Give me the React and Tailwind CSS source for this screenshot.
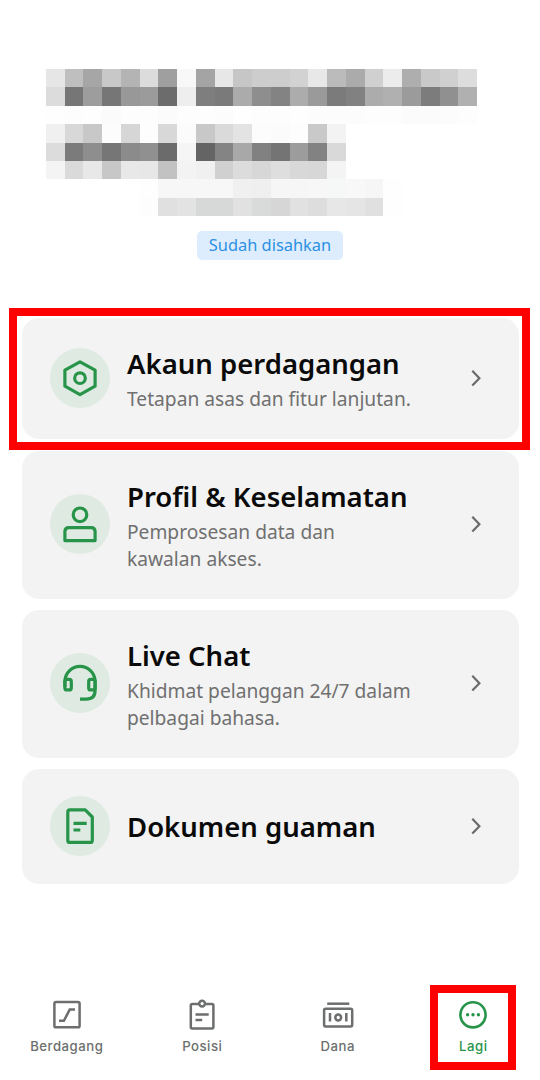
import clsx from "clsx";

/* gray level per cell (two hex digits), tinted cells are written in full */
const MOSAIC = [
  "e6 bf a6 c8 b4 dc 9f f8 a4 e7 c6 cd cd d2 e8 bb ab d0 ec ae c9 d0 dd",
  "dc 76 9d 76 98 9b 6c ee 7e 7a ab 8e 83 ac 9a 7b 81 ac b0 9b 7c 90 b0",
  "fe fd fe fb fd fd fb fd fd fc fe fd fd fe fc fc fc fd fd fb fb fc fd",
  "f0 d8 c8 fc d6 fd d8 fb c8 da e3 fc fb fd c9 f3 ff ff ff ff ff ff ff",
  "dc 7b 8e 76 8b 90 6b f5 64 84 a8 81 74 9c 82 d9 ff ff ff ff ff ff ff",
  "f4 da e8 c7 e8 e7 c2 f3 f0 d0 dc d7 de d8 d7 f4 ff ff ff ff ff ff ff",
  "ff ff ff ff ff fe f7 f7 f7 f7 f0 ef f6 f6 f7 f5f8f7 f8 f6 fe ff ff ff ff",
  "ff ff ff ff ff fd e0 e3 d6d9d8 d6d9d8 e1 d8dbda d6 e1 dd e7 e5 e0 fe ff ff ff ff",
];

const cellColor = (c) => (c.length === 2 ? `#${c}${c}${c}` : `#${c}`);

/* ─── icons ─────────────────────────────────────────────── */
const Icon = ({ size, viewBox, children, strokeWidth = 3.2 }) => (
  <svg
    width={size}
    height={size}
    viewBox={viewBox}
    fill="none"
    stroke="currentColor"
    strokeWidth={strokeWidth}
    strokeLinejoin="round"
  >
    {children}
  </svg>
);

const HexIcon = () => (
  <Icon size={40} viewBox="0 0 40 40">
    <path d="M20 3.8 35.1 12.2V28.2L20 36.6 4.9 28.2V12.2Z" />
    <circle cx="20" cy="20.2" r="5.3" />
  </Icon>
);

const ProfileIcon = () => (
  <Icon size={40} viewBox="0 0 40 40">
    <circle cx="20" cy="10.8" r="6.8" />
    <path d="M4.9 36.6V27.6Q4.9 23.6 8.9 23.6H31.1Q35.1 23.6 35.1 27.6V36.6Z" />
  </Icon>
);

const HeadsetIcon = () => (
  <Icon size={40} viewBox="0 0 40 40">
    <path d="M4.9 24V18.4A15.1 15 0 0 1 35.1 18.4V27.3Q35.1 36.2 26.2 36.2H20" />
    <rect x="4.9" y="16.4" width="6.4" height="10.5" rx="2" />
    <rect x="28.7" y="16.4" width="6.4" height="10.5" rx="2" />
  </Icon>
);

const DocumentIcon = () => (
  <Icon size={40} viewBox="0 0 40 40">
    <path d="M9.8 3.9H25.2L32.3 11V34.4Q32.3 36.4 30.3 36.4H9.8Q7.8 36.4 7.8 34.4V5.9Q7.8 3.9 9.8 3.9Z" />
    <path d="M13.5 17.3H26.7M13.5 24H20.3" />
  </Icon>
);

const TradeIcon = () => (
  <Icon size={32} viewBox="0 0 32 32" strokeWidth={2.5}>
    <rect x="3.4" y="3.1" width="25.2" height="25.2" rx="1.6" />
    <path d="M8 21.8H12.9L18.7 10.6H24" strokeLinejoin="miter" />
  </Icon>
);

const PositionIcon = () => (
  <Icon size={32} viewBox="0 0 32 32" strokeWidth={2.5}>
    <path d="M13 5H6.2Q4.8 5 4.8 6.4V28.1Q4.8 29.5 6.2 29.5H26Q27.4 29.5 27.4 28.1V6.4Q27.4 5 26 5H19.2" />
    <circle cx="16.1" cy="4.6" r="2.9" />
    <path d="M9.5 15.6H22.7M9.5 21.1H16.2" />
  </Icon>
);

const FundsIcon = () => (
  <Icon size={32} viewBox="0 0 32 32" strokeWidth={2.5}>
    <path d="M5.2 4.7H27.3" />
    <rect x="2.1" y="9.8" width="28.1" height="17.6" rx="1.6" />
    <circle cx="16.2" cy="18.5" r="2.9" />
    <path d="M8 14.1V22.5M24.3 14.1V22.5" />
  </Icon>
);

const MoreIcon = () => (
  <Icon size={32} viewBox="0 0 32 32" strokeWidth={2.6}>
    <circle cx="16" cy="15.8" r="12.6" />
    <g fill="currentColor" stroke="none">
      <circle cx="10.6" cy="15.8" r="1.7" />
      <circle cx="16" cy="15.8" r="1.7" />
      <circle cx="21.4" cy="15.8" r="1.7" />
    </g>
  </Icon>
);

const Chevron = () => (
  <svg
    width="12"
    height="20"
    viewBox="0 0 12 20"
    fill="none"
    stroke="#6b6b6b"
    strokeWidth="2.2"
  >
    <path d="M2.3 2.8 9.4 10.2 2.3 17.6" />
  </svg>
);

const menu = [
  {
    title: "Akaun perdagangan",
    lines: ["Tetapan asas dan fitur lanjutan."],
    icon: HexIcon,
    box: "h-[121px] mb-3 pb-px",
    marked: true,
  },
  {
    title: "Profil & Keselamatan",
    lines: ["Pemprosesan data dan", "kawalan akses."],
    icon: ProfileIcon,
    box: "h-[148px] mb-[11px] pb-0.5",
  },
  {
    title: "Live Chat",
    lines: ["Khidmat pelanggan 24/7 dalam", "pelbagai bahasa."],
    icon: HeadsetIcon,
    box: "h-[148px] mb-[11px] pb-0.5",
  },
  {
    title: "Dokumen guaman",
    lines: [],
    icon: DocumentIcon,
    box: "h-[115px] pb-px",
  },
];

const tabs = [
  { label: "Berdagang", icon: TradeIcon },
  { label: "Posisi", icon: PositionIcon },
  { label: "Dana", icon: FundsIcon },
  { label: "Lagi", icon: MoreIcon, active: true },
];

const MenuCard = ({ title, lines, icon: CardIcon, box, marked }) => (
  <div
    className={clsx(
      "relative flex items-center rounded-[17px] bg-[#f3f3f3] pr-[37px] pl-7",
      box,
    )}
  >
    <div className="flex size-[60px] shrink-0 items-center justify-center rounded-full bg-[#dfebe2] text-[#27944a]">
      <CardIcon />
    </div>
    <div className="ml-[17px] grow pt-px whitespace-nowrap">
      <h2 className="text-[27.5px] leading-[37px] font-semibold text-[#0a0a0a]">
        {title}
      </h2>
      {lines.length > 0 && (
        <div className="-mb-px pt-1 text-[19.2px] leading-[26.5px] text-[#707070]">
          {lines.map((line) => (
            <p key={line}>{line}</p>
          ))}
        </div>
      )}
    </div>
    <Chevron />
    {marked && (
      <div className="absolute -top-[10px] -right-[11px] -bottom-[11px] -left-[13px] border-8 border-[#ff0000]" />
    )}
  </div>
);

export default function App() {
  return (
    <div className="flex h-[1080px] w-[540px] flex-col overflow-hidden bg-white font-['Noto_Sans',sans-serif]">
      {/* Account name, hidden */}
      <div className="mt-[69px] ml-[46px] grid h-[147px] w-[431px] shrink-0 grid-cols-23 grid-rows-8">
        {MOSAIC.flatMap((row, y) =>
          row
            .split(" ")
            .map((c, x) => (
              <div key={`${y}-${x}`} style={{ background: cellColor(c) }} />
            )),
        )}
      </div>

      <div className="mt-[15px] flex h-[29px] w-[146px] shrink-0 items-center justify-center self-center rounded-[5px] bg-[#deedfd] pb-px text-[16.4px] text-[#2b91e2]">
        Sudah disahkan
      </div>

      <main className="mt-[58px] ml-[22px] w-[497px]">
        {menu.map((item) => (
          <MenuCard key={item.title} {...item} />
        ))}
      </main>

      {/* Bottom tabs */}
      <nav className="-mx-px mt-auto flex h-[95px] shrink-0 font-['Inter',sans-serif]">
        {tabs.map(({ label, icon: TabIcon, active }) => (
          <div
            key={label}
            className={clsx(
              "relative flex flex-1 flex-col items-center pt-[14px]",
              active ? "text-[#27944a]" : "text-[#6c6f6d]",
            )}
          >
            <TabIcon />
            <span className="mt-[5px] text-[13.2px] leading-5 font-medium tracking-[0.5px]">
              {label}
            </span>
            {active && (
              <div className="absolute top-0 left-[24.5px] h-[85px] w-[86px] border-8 border-[#ff0000]" />
            )}
          </div>
        ))}
      </nav>
    </div>
  );
}
